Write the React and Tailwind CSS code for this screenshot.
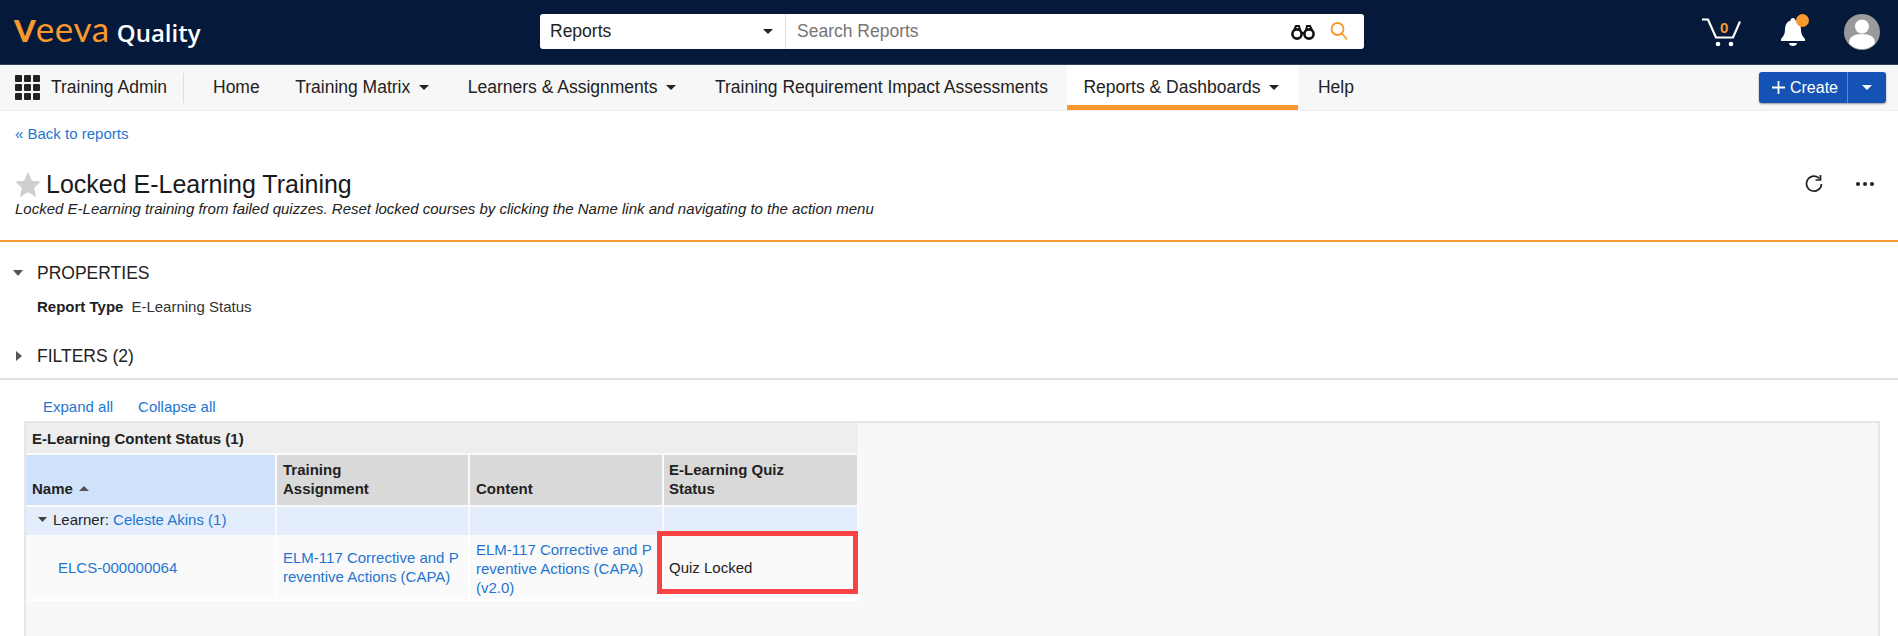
const font = { fontFamily: '"Liberation Sans", Arial, sans-serif' };

const Caret = ({ className = "" }) => (
  <svg width="10" height="5" viewBox="0 0 10 5" className={className}>
    <path d="M0 0h10L5 5z" fill="currentColor" />
  </svg>
);

const NavItem = ({ label, caret, active }) => (
  <div
    className={`flex h-[45px] items-center gap-[9px] pl-[16px] border-b-[5px] pt-[4px] ${
      caret ? "pr-[19px]" : "pr-[16px]"
    } ${active ? "bg-white border-[#f7992e]" : "border-transparent"}`}
  >
    <span>{label}</span>
    {caret && <Caret className="text-[#222]" />}
  </div>
);

const Logo = () => (
  <div className="flex items-baseline w-[540px] pl-[14px] pb-[6px] text-[#f7992e] font-['Lato']">
    <span className="text-[31px] leading-none font-black">V</span>
    <span className="text-[35px] leading-none tracking-[0.6px]">eeva</span>
    <span className="ml-[7px] text-[24px] leading-none font-semibold text-white font-['Open_Sans']">Quality</span>
  </div>
);

const Binoculars = () => (
  <svg width="26" height="16" viewBox="0 0 26 16" fill="none" stroke="#111" strokeWidth="2.6">
    <circle cx="7" cy="10" r="4.6" />
    <circle cx="19" cy="10" r="4.6" />
    <path d="M11 9h4M4 6l2-4h3l1 4M22 6l-2-4h-3l-1 4" strokeWidth="2" />
  </svg>
);

const Search = () => (
  <svg width="20" height="22" viewBox="0 0 20 22" fill="none" stroke="#f7992e" strokeWidth="1.8">
    <circle cx="8.5" cy="8" r="6" />
    <path d="M13 12.5l5 6" />
  </svg>
);

const Cart = () => (
  <svg width="40" height="29" viewBox="0 0 40 29" fill="none" stroke="#fff" strokeWidth="2.2">
    <path d="M0 1.500h6l8 18h17l7-16" />
    <circle cx="16" cy="26" r="2.300" fill="#fff" stroke="none" />
    <circle cx="29" cy="26" r="2.300" fill="#fff" stroke="none" />
  </svg>
);

const Bell = () => (
  <svg width="26" height="30" viewBox="0 0 26 30">
    <path d="M13 1c1.500 0 2.400 1 2.500 2.400C20 5 21 9 21 13c0 4 1.600 6.500 4 9v2H1v-2c2.400-2.500 4-5 4-9 0-4 1-8 5.500-9.600C10.600 2 11.500 1 13 1z" fill="#fff" />
    <path d="M9 26h8c0 2-1.800 3-4 3s-4-1-4-3z" fill="#fff" />
  </svg>
);

const Avatar = () => (
  <svg width="36" height="36" viewBox="0 0 36 36">
    <circle cx="18" cy="18" r="18" fill="#9a9a9a" />
    <circle cx="18" cy="12.500" r="7" fill="#fff" />
    <path d="M5 29c0-6 5-9 13-9s13 3 13 9c-3 4-8 6-13 6s-10-2-13-6z" fill="#fff" />
  </svg>
);

const Grid = () => (
  <div className="grid grid-cols-3 gap-[2px] w-[25px] h-[25px]">
    {Array.from({ length: 9 }).map((_, i) => (
      <div key={i} className="bg-[#222] rounded-[1px]" />
    ))}
  </div>
);

const Star = () => (
  <svg width="26" height="25" viewBox="0 0 24 23">
    <path d="M12 0l3.500 8 8.500.8-6.400 5.700 1.900 8.500L12 18.600 4.500 23l1.900-8.500L0 8.800 8.500 8z" fill="#cfcfcf" />
  </svg>
);

const Refresh = () => (
  <svg width="20" height="20" viewBox="0 0 20 20" fill="none" stroke="#222" strokeWidth="1.700">
    <path d="M15.500 4.500A7.500 7.500 0 1 0 17.500 10" />
    <path d="M16.500 1v5h-5" />
  </svg>
);

const Section = ({ label, open }) => (
  <div className="flex items-center h-[24px] text-[17.5px] text-[#222]">
    <div className="w-[37px] pl-[13px] text-[#555]">
      {open ? (
        <svg width="10" height="6" viewBox="0 0 10 6">
          <path d="M0 0h10L5 6z" fill="currentColor" />
        </svg>
      ) : (
        <svg width="6" height="10" viewBox="0 0 6 10" className="ml-[3px]">
          <path d="M0 0l6 5-6 5z" fill="currentColor" />
        </svg>
      )}
    </div>
    {label}
  </div>
);

export default function App() {
  return (
    <div style={font} className="w-[1898px] h-[636px] overflow-hidden bg-white text-[#222]">
      {/* top bar */}
      <div className="flex items-center h-[65px] pb-[1px] bg-[#051a3a] border-b border-[#33415a]">
        <Logo />
        <div className="flex items-center w-[824px] h-[35px] bg-white rounded-[3px] text-[17.5px]">
          <div className="flex items-center justify-between w-[246px] h-full px-[10px] border-r border-[#d8dbe2]">
            <span>Reports</span>
            <Caret className="text-[#222] mr-[2px]" />
          </div>
          <div className="flex flex-1 items-center justify-between pl-[11px] pr-[15px] text-[#757575]">
            <span>Search Reports</span>
            <div className="flex items-center gap-[13px]">
              <Binoculars />
              <Search />
            </div>
          </div>
        </div>
        <div className="flex flex-1 items-center justify-end pr-[18px]">
          <div className="relative mr-[38px] mt-[2px]">
            <Cart />
            <span className="absolute left-[18px] top-[2px] text-[15px] font-bold leading-none text-[#f7992e]">0</span>
          </div>
          <div className="relative mr-[38px]">
            <Bell />
            <span className="absolute left-[16px] -top-[3px] w-[13px] h-[13px] rounded-full bg-[#f7992e]" />
          </div>
          <Avatar />
        </div>
      </div>

      {/* nav */}
      <div className="flex items-center gap-[3.5px] h-[46px] bg-[#f7f7f7] border-b border-[#eee] text-[17.5px] text-[#222]">
        <div className="flex items-center pl-[15px] w-[184px] h-[30px] border-r border-[#ddd] gap-[11px] mr-[9.5px]">
          <Grid />
          <span>Training Admin</span>
        </div>
        <NavItem label="Home" />
        <NavItem label="Training Matrix" caret />
        <NavItem label="Learners & Assignments" caret />
        <NavItem label="Training Requirement Impact Assessments" />
        <NavItem label="Reports & Dashboards" caret active />
        <NavItem label="Help" />
        <div className="ml-auto mr-[12px] flex h-[31px] text-[16px] text-white rounded-[3px] bg-[#1453b5] shadow-[0_1px_2px_rgba(0,0,0,0.4)]">
          <div className="flex items-center gap-[4px] pl-[12px] pr-[9px] border-r border-[#5c8ad0]">
            <svg width="15" height="15" viewBox="0 0 15 15" stroke="#fff" strokeWidth="1.800">
              <path d="M7.500 1v13M1 7.500h13" />
            </svg>
            Create
          </div>
          <div className="flex items-center justify-center w-[38px]">
            <Caret />
          </div>
        </div>
      </div>

      <div className="pl-[15px] pt-[13px] h-[52px] text-[15px] leading-[20px] text-[#1f75d1]">« Back to reports</div>

      {/* title */}
      <div className="flex items-start justify-between h-[79px] pt-[6px] pl-[15px] pr-[24px] border-b-2 border-[#f7992e]">
        <div>
          <div className="flex items-center gap-[5px] h-[30px] pt-[1px]">
            <Star />
            <span className="text-[25px] text-[#1a1a1a]">Locked E-Learning Training</span>
          </div>
          <div className="mt-[1px] text-[15px] leading-[18px] italic">
            Locked E-Learning training from failed quizzes. Reset locked courses by clicking the Name link and navigating to the action menu
          </div>
        </div>
        <div className="flex items-center gap-[32px] pt-[5px]">
          <Refresh />
          <div className="flex gap-[3px]">
            <span className="w-[4px] h-[4px] rounded-full bg-[#222]" />
            <span className="w-[4px] h-[4px] rounded-full bg-[#222]" />
            <span className="w-[4px] h-[4px] rounded-full bg-[#222]" />
          </div>
        </div>
      </div>

      {/* sections */}
      <div className="h-[138px] pt-[19px] border-b-2 border-[#e2e2e2]">
        <Section label="PROPERTIES" open />
        <div className="mt-[12px] pl-[37px] text-[15px] leading-[20px]">
          <span className="font-bold">Report Type</span>
          <span className="ml-[8px] text-[#333]">E-Learning Status</span>
        </div>
        <div className="mt-[27px]">
          <Section label="FILTERS (2)" />
        </div>
      </div>

      <div className="flex gap-[25px] pl-[43px] pt-[17px] h-[41px] text-[15px] leading-[20px] text-[#1f75d1]">
        <span>Expand all</span>
        <span>Collapse all</span>
      </div>

      {/* report table */}
      <div className="ml-[24px] mr-[18px] h-[300px] bg-[#f8f8f8] border-t-[2px] border-x-[2px] border-[#e6e6e6] text-[15px] leading-[19px]">
        <div className="w-[832px]">
          <div className="flex items-center h-[30px] pl-[6px] pt-[1px] bg-[#eeeeee] font-bold">E-Learning Content Status (1)</div>
          <table className="w-[832px] table-fixed border-collapse">
            <colgroup>
              <col className="w-[250px]" />
              <col className="w-[193px]" />
              <col className="w-[194px]" />
              <col className="w-[195px]" />
            </colgroup>
            <thead>
              <tr className="h-[52px] font-bold align-bottom text-left">
                <th className="bg-[#d0e2f9] border-2 border-[#fafafa] border-l-0 px-[6px] pb-[7px]">
                  <span className="inline-flex items-center gap-[6px]">
                    Name
                    <svg width="10" height="5" viewBox="0 0 10 5"><path d="M5 0l5 5H0z" fill="#555" /></svg>
                  </span>
                </th>
                <th className="bg-[#d9d9d9] border-2 border-[#fafafa] px-[6px] pb-[7px]">Training<br />Assignment</th>
                <th className="bg-[#d9d9d9] border-2 border-[#fafafa] px-[6px] pb-[7px]">Content</th>
                <th className="bg-[#d9d9d9] border-2 border-[#fafafa] px-[5px] pb-[7px]">E-Learning Quiz<br />Status</th>
              </tr>
            </thead>
            <tbody>
              <tr className="h-[29px] bg-[#e3edfb]">
                <td className="border-2 border-[#fafafa] border-l-0 pl-[12px] pb-[6px]">
                  <span className="inline-flex items-center gap-[6px]">
                    <svg width="9" height="5" viewBox="0 0 9 5"><path d="M0 0h9L4.500 5z" fill="#444" /></svg>
                    <span className="whitespace-pre">Learner: <span className="text-[#1f75d1]">Celeste Akins (1)</span></span>
                  </span>
                </td>
                <td className="border-2 border-[#fafafa]" />
                <td className="border-2 border-[#fafafa]" />
                <td className="border-2 border-[#fafafa]" />
              </tr>
              <tr className="h-[64px] bg-[#fafafa] text-[#1f75d1]">
                <td className="border-2 border-[#fff] border-l-0 pl-[32px] pb-[2px]">ELCS-000000064</td>
                <td className="border-2 border-[#fff] px-[6px] pb-[3px]">ELM-117 Corrective and P<br />reventive Actions (CAPA)</td>
                <td className="border-2 border-[#fff] px-[6px]">ELM-117 Corrective and P<br />reventive Actions (CAPA)<br />(v2.0)</td>
                <td className="relative border-2 border-[#fff] px-[5px] text-[#222] align-middle">
                  <span className="relative -top-[1px]">Quiz Locked</span>
                  <div className="absolute -left-[7px] -top-[6px] w-[201px] h-[63px] border-[5px] border-[#f74343]" />
                </td>
              </tr>
            </tbody>
          </table>
        </div>
      </div>
    </div>
  );
}
